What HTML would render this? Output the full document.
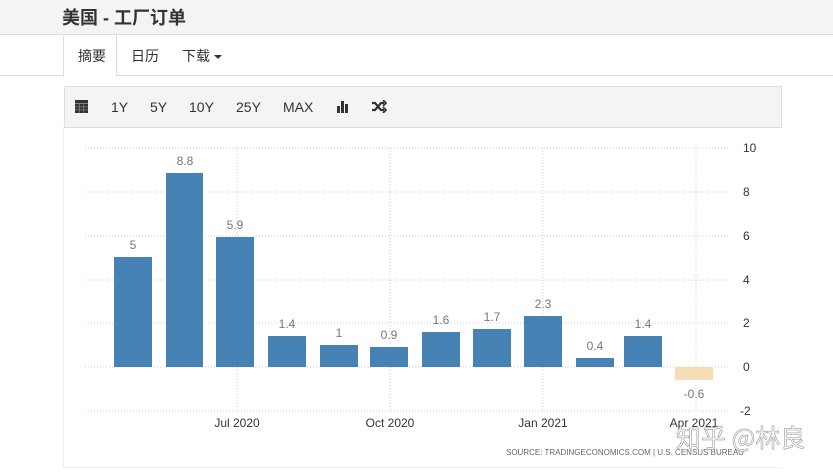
<!DOCTYPE html>
<html><head><meta charset="utf-8"><style>
body{margin:0;width:833px;height:473px;overflow:hidden;background:#fff;font-family:"Liberation Sans","Noto Sans CJK SC",sans-serif;position:relative}
.top{position:absolute;left:0;top:0;width:833px;height:34px;background:#f4f4f4;border-bottom:1px solid #ddd}
.title{position:absolute;left:62px;top:4px;font-size:18px;font-weight:bold;color:#333}
.tabs{position:absolute;left:0;top:75px;width:833px;border-top:1px solid #ddd}
.tab{position:absolute;top:46px;font-size:14px;color:#333}
.active{position:absolute;left:63px;top:35px;width:52px;height:41px;background:#fff;border-left:1px solid #ddd;border-right:1px solid #ddd}
.tb{position:absolute;left:64px;top:86px;width:716px;height:40px;background:#f4f4f4;border:1px solid #ddd}
.tb span{position:absolute;top:12px;font-size:14px;color:#333}
.chart{position:absolute;left:63px;top:127px;width:717px;height:340px;border-left:1px solid #eee;border-bottom:1px solid #eee}
</style></head><body>
<div class="top"><div class="title">美国 - 工厂订单</div></div>
<div class="tabs"></div>
<div class="active"></div>
<div class="tab" style="left:78px">摘要</div>
<div class="tab" style="left:131px">日历</div>
<div class="tab" style="left:182px">下载 <span style="display:inline-block;border-left:4px solid transparent;border-right:4px solid transparent;border-top:4px solid #333;vertical-align:middle"></span></div>
<div class="tb">
<svg style="position:absolute;left:10px;top:13px" width="13" height="13"><rect x="0" y="0" width="13" height="13" fill="#333"/><g fill="#888"><rect x="0" y="3" width="13" height="1"/><rect x="0" y="6.5" width="13" height="0.7"/><rect x="0" y="9.5" width="13" height="0.7"/><rect x="4" y="4" width="0.7" height="9"/><rect x="8.3" y="4" width="0.7" height="9"/></g></svg>
<span style="left:46px">1Y</span><span style="left:85px">5Y</span><span style="left:124px">10Y</span><span style="left:171px">25Y</span><span style="left:218px">MAX</span>
<svg style="position:absolute;left:272px;top:13px" width="13" height="13"><rect x="0" y="6" width="3" height="7" fill="#333"/><rect x="4" y="1" width="3" height="12" fill="#333"/><rect x="8" y="4" width="3" height="9" fill="#333"/></svg>
<svg style="position:absolute;left:307px;top:13px" width="15" height="13" fill="none" stroke="#333" stroke-width="2.2"><path d="M0 3h3l6 7h3M0 10h3l6-7h3"/><path d="M11 0l3 3-3 3M11 7l3 3-3 3" stroke-width="1.8"/></svg>
</div>
<div class="chart"></div>
<svg style="position:absolute;left:0;top:0" width="833" height="473" font-family="Liberation Sans,sans-serif">
<g stroke="#ccc" stroke-dasharray="1,2" stroke-width="1">
<line x1="85" y1="148" x2="728" y2="148"/><line x1="85" y1="192" x2="728" y2="192"/><line x1="85" y1="236" x2="728" y2="236"/><line x1="85" y1="280" x2="728" y2="280"/><line x1="85" y1="323" x2="728" y2="323"/><line x1="85" y1="367" x2="728" y2="367"/><line x1="85" y1="411" x2="728" y2="411"/>
<line x1="237" y1="148" x2="237" y2="411"/><line x1="390" y1="148" x2="390" y2="411"/><line x1="543" y1="148" x2="543" y2="411"/><line x1="696" y1="148" x2="696" y2="411"/>
</g>
<g fill="#4682b4">
<rect x="114" y="257" width="38" height="110"/><rect x="166" y="173" width="37" height="194"/><rect x="216" y="237" width="38" height="130"/><rect x="268" y="336" width="38" height="31"/><rect x="320" y="345" width="38" height="22"/><rect x="370" y="347" width="38" height="20"/><rect x="422" y="332" width="38" height="35"/><rect x="473" y="329" width="38" height="38"/><rect x="524" y="316" width="38" height="51"/><rect x="576" y="358" width="38" height="9"/><rect x="624" y="336" width="38" height="31"/>
</g>
<rect x="675" y="367" width="38" height="13" fill="#f5deb3"/>
<g fill="#777" font-size="12" text-anchor="middle">
<text x="133" y="249">5</text><text x="185" y="165">8.8</text><text x="235" y="229">5.9</text><text x="287" y="328">1.4</text><text x="339" y="337">1</text><text x="389" y="339">0.9</text><text x="441" y="324">1.6</text><text x="492" y="321">1.7</text><text x="543" y="308">2.3</text><text x="595" y="350">0.4</text><text x="643" y="328">1.4</text><text x="694" y="398">-0.6</text>
</g>
<g fill="#333" font-size="12">
<text x="743" y="152">10</text><text x="743" y="196">8</text><text x="743" y="240">6</text><text x="743" y="284">4</text><text x="743" y="327">2</text><text x="743" y="371">0</text><text x="740" y="415">-2</text>
</g>
<g fill="#333" font-size="12" text-anchor="middle">
<text x="237" y="427">Jul 2020</text><text x="390" y="427">Oct 2020</text><text x="543" y="427">Jan 2021</text><text x="694" y="427">Apr 2021</text>
</g>
<text x="506" y="455" font-size="8" fill="#666">SOURCE: TRADINGECONOMICS.COM | U.S. CENSUS BUREAU</text>
<text x="676" y="447" font-size="25" fill="#fff" fill-opacity="0.85" stroke="#999" stroke-width="0.6" font-family="Noto Sans CJK SC,sans-serif">知乎 @林良</text>
</svg>
</body></html>
